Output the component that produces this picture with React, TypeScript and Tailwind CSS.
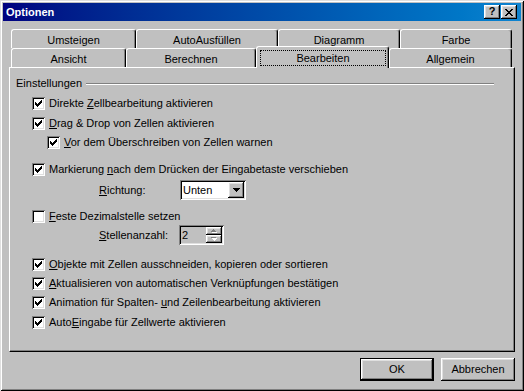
import React from 'react';

const raised =
  'shadow-[inset_-1px_-1px_#000,inset_1px_1px_#fff,inset_-2px_-2px_#808080,inset_2px_2px_#dfdfdf]';
const sunken =
  'shadow-[inset_1px_1px_#808080,inset_-1px_-1px_#fff,inset_2px_2px_#000,inset_-2px_-2px_#dfdfdf]';

const CheckMark = () => (
  <svg width="7" height="7" viewBox="0 0 7 7" shapeRendering="crispEdges" className="block">
    {[2, 3, 4, 3, 2, 1, 0].map((y, x) => (
      <rect key={x} x={x} y={y} width="1" height="3" fill="#000" />
    ))}
  </svg>
);

const CloseGlyph = () => (
  <svg width="8" height="7" viewBox="0 0 8 7" shapeRendering="crispEdges" className="block">
    {[0, 1, 2, 3, 4, 5, 6].map((r) => {
      const d = Math.abs(r - 3);
      return (
        <g key={r}>
          <rect x={3 - d} y={r} width="2" height="1" fill="#000" />
          <rect x={3 + d} y={r} width="2" height="1" fill="#000" />
        </g>
      );
    })}
  </svg>
);

const DownArrow = () => (
  <svg width="7" height="4" viewBox="0 0 7 4" shapeRendering="crispEdges" className="block">
    {[0, 1, 2, 3].map((r) => (
      <rect key={r} x={r} y={r} width={7 - 2 * r} height="1" fill="#000" />
    ))}
  </svg>
);

// disabled spin arrow, grey with white emboss
const SpinArrow = ({ up }: { up?: boolean }) => (
  <svg width="6" height="4" viewBox="0 0 6 4" shapeRendering="crispEdges" className="block">
    {[0, 1, 2].map((r) => {
      const row = up ? r : 2 - r;
      return (
        <g key={r}>
          <rect x={3 - r} y={row + 1} width={2 * r + 1} height="1" fill="#fff" />
          <rect x={2 - r} y={row} width={2 * r + 1} height="1" fill="#808080" />
        </g>
      );
    })}
  </svg>
);

const CheckBox = ({ checked }: { checked?: boolean }) => (
  <span className={`flex h-[13px] w-[13px] shrink-0 bg-white p-[3px] ${sunken}`}>
    {checked && <CheckMark />}
  </span>
);

const CheckRow = ({
  checked,
  indent,
  className = '',
  children,
}: {
  checked?: boolean;
  indent?: boolean;
  className?: string;
  children: React.ReactNode;
}) => (
  <div className={`flex h-[19px] items-center gap-[4px] ${indent ? 'pl-[37px]' : 'pl-[22px]'} ${className}`}>
    <CheckBox checked={checked} />
    <span className="whitespace-nowrap">{children}</span>
  </div>
);

const Tab = ({ label, width }: { label: string; width: string }) => (
  <div
    className={`flex h-full shrink-0 items-center justify-center rounded-t-[3px] border-l border-t border-r border-white border-r-black pt-[2px] shadow-[inset_-1px_0_#808080] ${width}`}
  >
    {label}
  </div>
);

export default function App() {
  return (
    <div className="flex h-[391px] w-[524px] select-none flex-col bg-[#c0c0c0] p-[3px] font-['Liberation_Sans',Arial,sans-serif] text-[11px] leading-[13px] text-black shadow-[inset_1px_1px_#dfdfdf,inset_-1px_-1px_#000,inset_2px_2px_#fff,inset_-2px_-2px_#808080]">
      {/* title bar */}
      <div className="flex h-[18px] shrink-0 items-center justify-between bg-gradient-to-r from-[#000080] to-[#1084d0] pl-[3px] pr-[4px]">
        <span className="text-[11px] font-bold text-white">Optionen</span>
        <div className="flex gap-[1px]">
          <button className={`flex h-[14px] w-[16px] items-center justify-center bg-[#c0c0c0] pb-[1px] text-[11px] font-bold leading-none ${raised}`}>
            ?
          </button>
          <button className={`flex h-[14px] w-[16px] items-center justify-center bg-[#c0c0c0] ${raised}`}>
            <CloseGlyph />
          </button>
        </div>
      </div>

      {/* tabs */}
      <div className="mx-[6px] mt-[8px] shrink-0">
        <div className="flex h-[19px] pl-[2px]">
          <Tab label="Umsteigen" width="w-[125px]" />
          <Tab label="AutoAusfüllen" width="w-[142px]" />
          <Tab label="Diagramm" width="w-[122px]" />
          <Tab label="Farbe" width="w-[112px]" />
        </div>
        <div className="flex h-[19px] items-end pl-[2px]">
          <Tab label="Ansicht" width="w-[115px]" />
          <Tab label="Berechnen" width="w-[130px]" />
          <div className="relative z-10 -mb-[1px] flex h-[22px] w-[133px] shrink-0 rounded-t-[3px] border-l border-t border-r border-white border-r-black bg-[#c0c0c0] pb-[2px] pl-[3px] pr-[2px] pt-[3px] shadow-[inset_-1px_0_#808080]">
            <div className="flex flex-1 items-center justify-center border border-dotted border-black">Bearbeiten</div>
          </div>
          <Tab label="Allgemein" width="w-[123px]" />
        </div>
      </div>

      {/* panel */}
      <div className="mx-[6px] flex h-[285px] shrink-0 flex-col border border-white border-b-black border-r-black pt-[6px] shadow-[inset_-1px_-1px_#808080]">
        <div className="flex h-[19px] items-center pl-[6px] pr-[20px]">
          <span>Einstellungen</span>
          <div className="ml-[4px] h-0 flex-1 border-b border-t border-b-white border-t-[#808080]" />
        </div>
        <CheckRow checked className="mt-[1px]">
          Direkte <u>Z</u>ellbearbeitung aktivieren
        </CheckRow>
        <CheckRow checked className="mt-[1px]">
          <u>D</u>rag &amp; Drop von Zellen aktivieren
        </CheckRow>
        <CheckRow checked indent>
          <u>V</u>or dem Überschreiben von Zellen warnen
        </CheckRow>
        <CheckRow checked className="mt-[8px]">
          Markierung <u>n</u>ach dem Drücken der Eingabetaste verschieben
        </CheckRow>
        <div className="mt-[1px] flex h-[20px] items-center pl-[89px]">
          <span className="w-[81px]">
            <u>R</u>ichtung:
          </span>
          <div className={`flex h-[20px] w-[66px] bg-white p-[2px] ${sunken}`}>
            <span className="flex flex-1 items-center pl-[1px]">Unten</span>
            <span className={`flex h-[16px] w-[16px] items-center justify-center bg-[#c0c0c0] ${raised}`}>
              <DownArrow />
            </span>
          </div>
        </div>
        <CheckRow className="mt-[8px] !h-[17px]">
          <u>F</u>este Dezimalstelle setzen
        </CheckRow>
        <div className="flex h-[20px] items-center pl-[89px]">
          <span className="w-[80px]">
            <u>S</u>tellenanzahl:
          </span>
          <div className={`flex h-[20px] w-[45px] bg-[#c0c0c0] p-[2px] ${sunken}`}>
            <span className="flex flex-1 items-center pl-[1px]">2</span>
            <div className="flex w-[16px] flex-col">
              <span className={`flex h-[8px] items-center justify-center ${raised}`}>
                <SpinArrow up />
              </span>
              <span className={`flex h-[8px] items-center justify-center ${raised}`}>
                <SpinArrow />
              </span>
            </div>
          </div>
        </div>
        <CheckRow checked className="mt-[10px]">
          <u>O</u>bjekte mit Zellen ausschneiden, kopieren oder sortieren
        </CheckRow>
        <CheckRow checked>
          <u>A</u>ktualisieren von automatischen Verknüpfungen bestätigen
        </CheckRow>
        <CheckRow checked>
          Animation für Spalten- <u>u</u>nd Zeilenbearbeitung aktivieren
        </CheckRow>
        <CheckRow checked className="mt-[1px]">
          Auto<u>E</u>ingabe für Zellwerte aktivieren
        </CheckRow>
      </div>

      {/* buttons */}
      <div className="mt-[6px] flex justify-end gap-[7px] pr-[6px]">
        <button className="h-[23px] w-[74px] border border-black bg-[#c0c0c0] p-0">
          <span className={`flex h-full w-full items-center justify-center ${raised}`}>OK</span>
        </button>
        <button className={`flex h-[23px] w-[74px] items-center justify-center bg-[#c0c0c0] ${raised}`}>
          Abbrechen
        </button>
      </div>
    </div>
  );
}
